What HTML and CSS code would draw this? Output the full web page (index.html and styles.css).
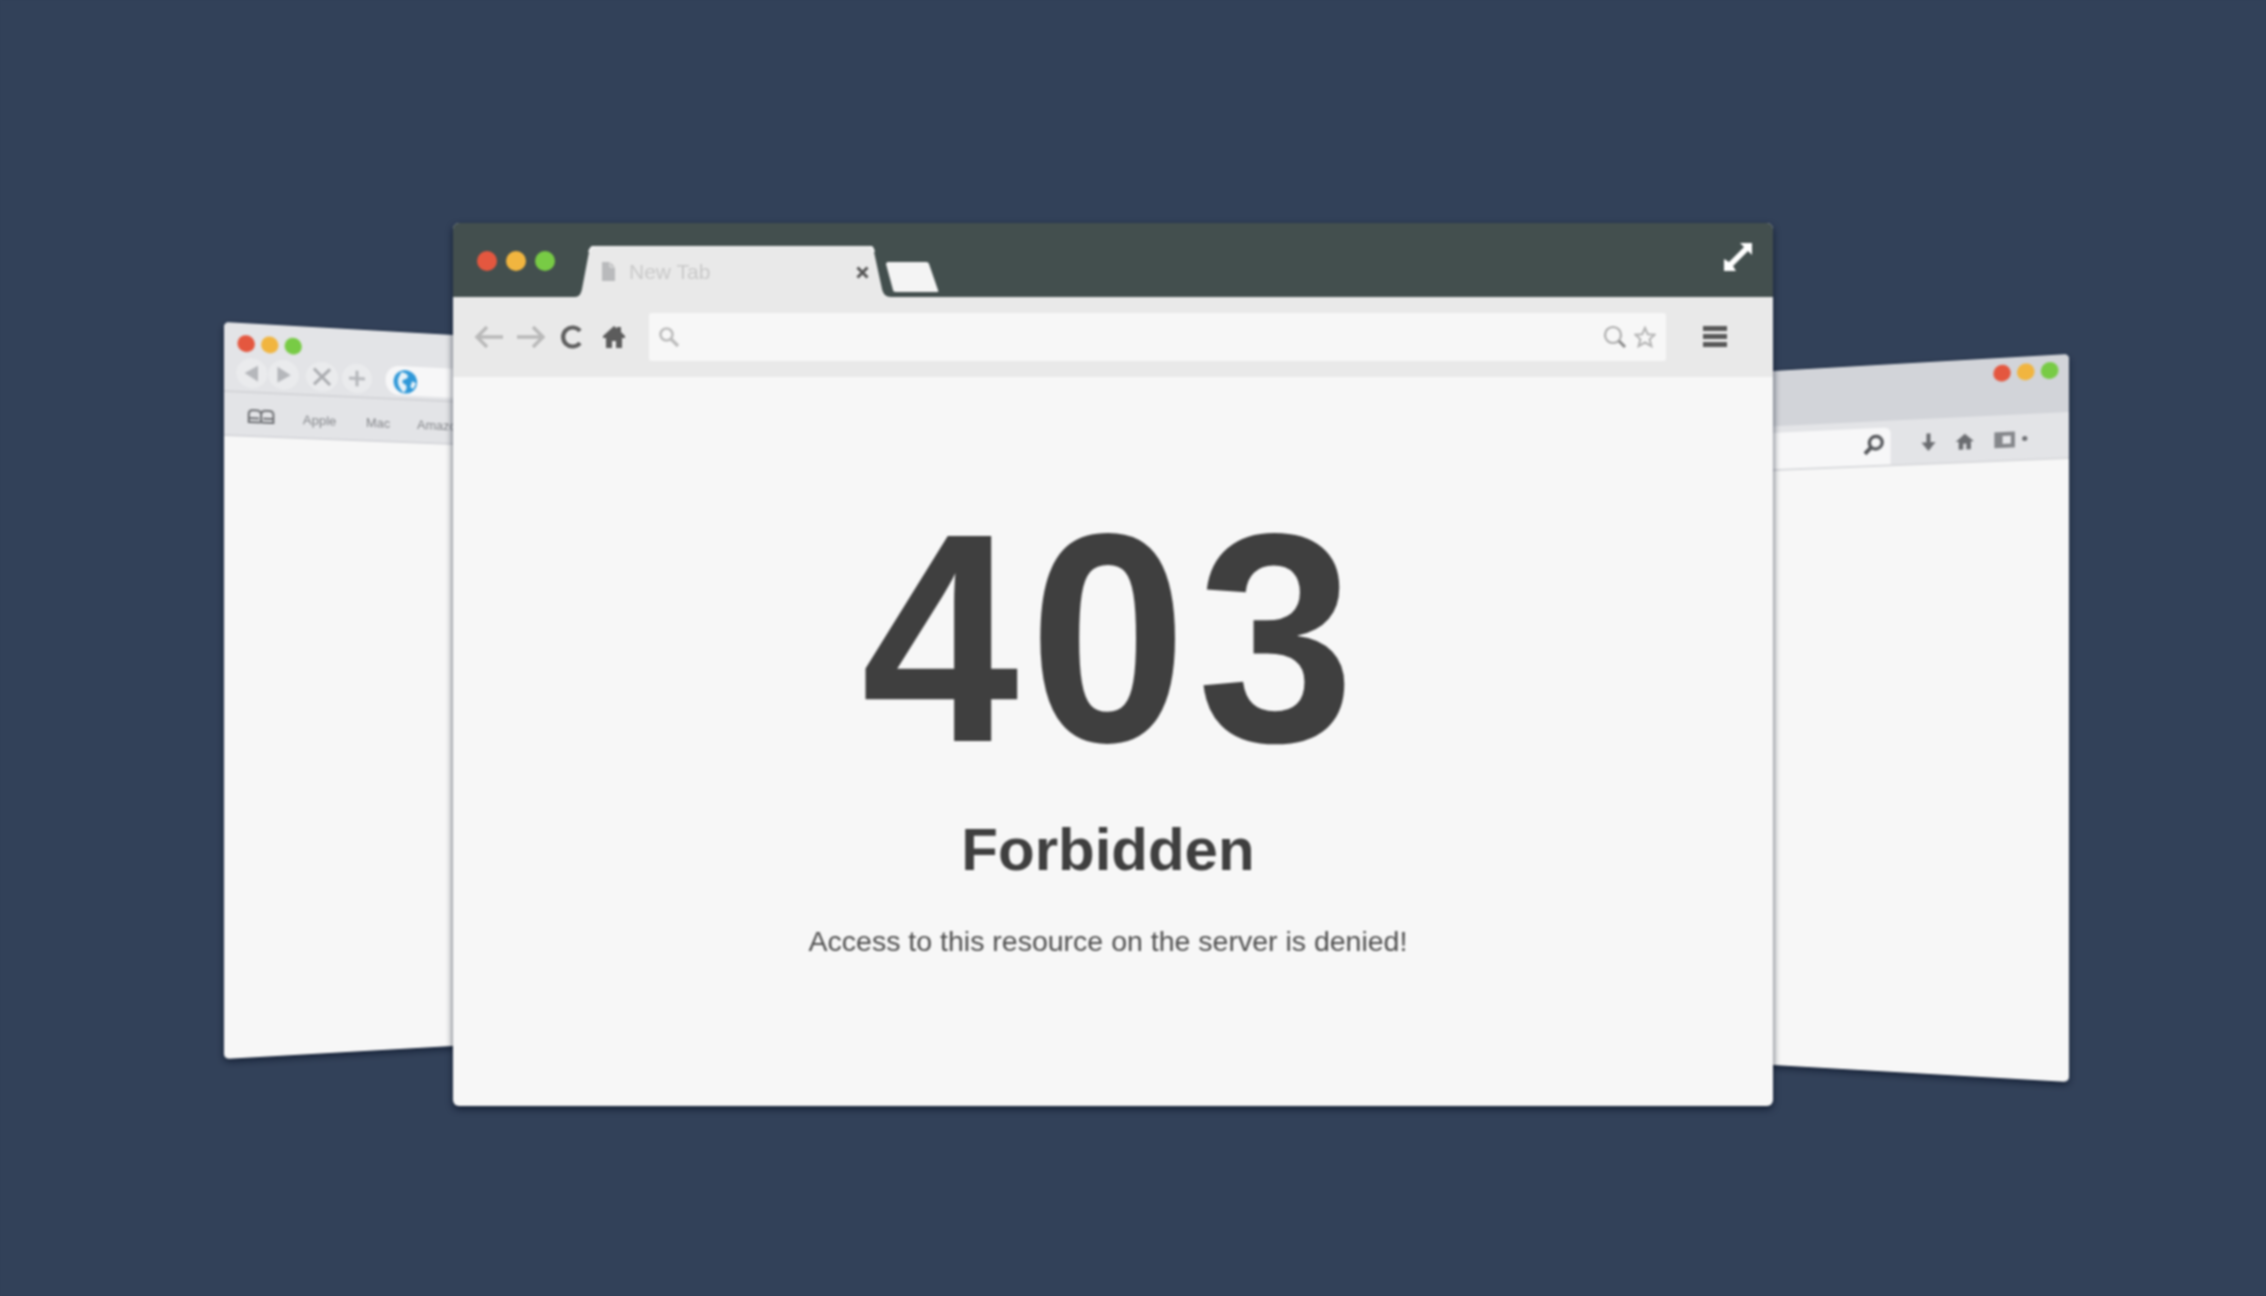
FILE: index.html
```html
<!DOCTYPE html>
<html lang="en">
<head>
<meta charset="utf-8">
<title>403 Forbidden</title>
<link rel="stylesheet" href="styles.css">
</head>
<body>
<div class="stage">

  <section class="side side-left">
    <div class="sl-chrome">
      <div class="sl-lights"><i class="dot red"></i><i class="dot yellow"></i><i class="dot green"></i></div>
      <div class="sl-tools">
        <span class="sl-btn"><svg width="18" height="20" viewBox="0 0 18 20"><path d="M15 2V18L2 10Z" fill="#b5b7bb"/></svg></span>
        <span class="sl-btn"><svg width="18" height="20" viewBox="0 0 18 20"><path d="M3 2V18L16 10Z" fill="#b5b7bb"/></svg></span>
        <span class="sl-btn sl-gap"><svg width="22" height="22" viewBox="0 0 22 22"><path d="M3 3L19 19M19 3L3 19" stroke="#a9abaf" stroke-width="3"/></svg></span>
        <span class="sl-btn"><svg width="20" height="20" viewBox="0 0 20 20"><path d="M10 2V18M2 10H18" stroke="#b5b7bb" stroke-width="3"/></svg></span>
        <span class="sl-field"><svg width="26" height="26" viewBox="0 0 26 26"><circle cx="13" cy="13" r="12" fill="#2f98d8"/><path d="M9 3C14 4 17 6 15 9C13 11 10 10 10 13C10 15 13 15 14 17C15 20 13 23 11 24C7 20 4 15 6 9Z" fill="#e8f3f9"/><path d="M20 12L24 14L21 20L18 18Z" fill="#e8f3f9"/></svg></span>
      </div>
      <div class="sl-marks">
        <svg width="28" height="16" viewBox="0 0 28 16"><path d="M14 6C14 3 12 2 9 2H6C3 2 2 3 2 6V14H12C13 14 14 13 14 12C14 13 15 14 16 14H26V6C26 3 25 2 22 2H19C16 2 14 3 14 6V12M2 10H12M16 10H26" fill="none" stroke="#6f7175" stroke-width="2"/></svg>
        <span class="sl-mark m1">Apple</span><span class="sl-mark m2">Mac</span><span class="sl-mark m3">Amazon</span>
      </div>
    </div>
  </section>

  <section class="side side-right">
    <div class="sr-title">
      <i class="dot red"></i><i class="dot yellow"></i><i class="dot green"></i>
    </div>
    <div class="sr-tools">
      <span class="sr-field"><svg width="24" height="24" viewBox="0 0 24 24"><circle cx="14" cy="10" r="6.5" fill="none" stroke="#55575b" stroke-width="3.4"/><path d="M9 15L3 21" stroke="#55575b" stroke-width="4"/></svg></span>
      <svg class="sr-ic1" width="16" height="22" viewBox="0 0 16 22"><path d="M6 1H10V10H15L8 19L1 10H6Z" fill="#6b6d71"/></svg>
      <svg width="20" height="20" viewBox="0 0 20 20"><path d="M10 2L19 10H16V18H11.5V12H8.5V18H4V10H1Z" fill="#6b6d71"/></svg>
      <svg width="22" height="18" viewBox="0 0 22 18"><path d="M1 1H21V17H1Z" fill="#85878b"/><path d="M9 5H17V13H9Z" fill="#e6e7ea"/></svg>
      <i class="sr-dot"></i>
    </div>
  </section>

  <main class="window">
    <header class="titlebar">
      <div class="lights"><i class="light red"></i><i class="light yellow"></i><i class="light green"></i></div>
      <div class="tab">
        <svg class="tab-shape" width="316" height="51" viewBox="0 0 316 51"><path d="M0 51C4 51 6 48 7 43L14 6C15 2 17 0 21 0H293C297 0 298 2 299 6L307 43C308 48 311 51 316 51Z" fill="#e9e9e9"/><path d="M14 6C15 2 17 0 21 0H293C297 0 298 2 299 6" fill="none" stroke="#f6f6f6" stroke-width="2"/></svg>
        <svg class="tab-doc" width="15" height="19" viewBox="0 0 15 19"><path d="M1 0H9L14 5V19H1Z" fill="#b9babc"/><path d="M9 0V5H14" fill="none" stroke="#e9e9e9"/></svg>
        <span class="tab-label">New Tab</span>
        <svg class="tab-close" width="13" height="13" viewBox="0 0 13 13"><path d="M1.500 1.500L11.500 11.500M11.500 1.500L1.500 11.500" stroke="#555" stroke-width="3"/></svg>
      </div>
      <svg class="newtab" width="54" height="30" viewBox="0 0 54 30"><path d="M1 2C1 1 2 0 3 0H41C43 0 44 1 44 2L53 28C54 30 53 30 51 30H11C9 30 8 29 8 28Z" fill="#f4f4f4"/></svg>
      <svg class="expand" width="32" height="32" viewBox="0 0 32 32"><path d="M18 2H30V14L26 10L11 25L14 30H2V18L7 21L22 6Z" fill="#fff"/></svg>
    </header>
    <nav class="toolbar">
      <svg width="30" height="24" viewBox="0 0 30 24"><path d="M29 12H4M13 2L3 12L13 22" fill="none" stroke="#b9b9b9" stroke-width="3.4"/></svg>
      <svg width="30" height="24" viewBox="0 0 30 24"><path d="M1 12H26M17 2L27 12L17 22" fill="none" stroke="#b9b9b9" stroke-width="3.4"/></svg>
      <svg width="24" height="24" viewBox="0 0 24 24"><path d="M20 6A9.500 9.500 0 1 0 20 18" fill="none" stroke="#5f5f5f" stroke-width="4.200"/></svg>
      <svg width="24" height="24" viewBox="0 0 24 24"><path d="M12 1L15 3.500V2H19V7L23 11V13H20V23H14V16H10V23H4V13H1V11Z" fill="#5c5c5c"/></svg>
      <div class="address">
        <svg width="22" height="22" viewBox="0 0 22 22"><circle cx="8.500" cy="8.500" r="6" fill="none" stroke="#bdbdbd" stroke-width="2.600"/><path d="M13 13L20 20" stroke="#bdbdbd" stroke-width="3.400"/></svg>
        <span class="address-end">
          <svg width="24" height="24" viewBox="0 0 24 24"><circle cx="10" cy="10" r="8" fill="none" stroke="#adadad" stroke-width="2.200"/><path d="M16 16L22 22" stroke="#8a8a8a" stroke-width="3"/></svg>
          <svg width="22" height="22" viewBox="0 0 24 24"><path d="M12 2L15 9L22.500 9.500L17 14.500L19 22L12 18L5 22L7 14.500L1.500 9.500L9 9Z" fill="none" stroke="#b4b4b4" stroke-width="2.200"/></svg>
        </span>
      </div>
      <div class="menu"><i></i><i></i><i></i></div>
    </nav>
    <div class="page">
      <h1 class="code">403</h1>
      <h2 class="name">Forbidden</h2>
      <p class="msg">Access to this resource on the server is denied!</p>
    </div>
  </main>
</div>
</body>
</html>
```

FILE: styles.css
```css
* { box-sizing: border-box; }
html, body { margin: 0; height: 100%; }
body { background: #324159; overflow: hidden; font-family: "Liberation Sans", Arial, sans-serif; }
.stage { position: relative; width: 2266px; height: 1296px; background: #324159; overflow: hidden; filter: blur(.9px); }
h1, h2, p { margin: 0; }
i { display: block; }

/* side windows on the canvas */
.side { position: absolute; background: #f7f7f7; border-radius: 5px; box-shadow: 0 3px 7px rgba(8, 18, 38, .7); overflow: hidden; }
.side-left { left: 224px; top: 322px; width: 240px; height: 737px; transform-origin: 0 0; transform: matrix3d(1.0366, .05885, 0, .00016, 0, 1, 0, 0, 0, 0, 1, 0, 0, 0, 0, 1); }
.side-right { left: 1760px; top: 354px; width: 309px; height: 728px; transform-origin: 100% 0; transform: matrix3d(1.049, -.06025, 0, -.0001655, 0, 1, 0, 0, 0, 0, 1, 0, 0, 0, 0, 1); }
.dot { width: 17px; height: 17px; border-radius: 50%; }
.red { background: #e4573f; }
.yellow { background: #f1b53f; }
.green { background: #78cb45; }

.sl-chrome { height: 114px; background: #e3e4e7; border-bottom: 2px solid #d6d7db; display: flex; flex-direction: column; }
.sl-lights { display: flex; gap: 6px; padding: 12px 0 0 13px; height: 32px; }
.sl-tools { display: flex; align-items: center; height: 38px; margin-bottom: 4px; padding-left: 12px; gap: 1px; border-bottom: 2px solid #d3d4d8; }
.sl-btn { width: 30px; height: 30px; border-radius: 50%; background: #eaebed; display: flex; align-items: center; justify-content: center; flex: none; }
.sl-gap { margin-left: 6px; margin-right: 3px; width: 32px; }
.sl-field { flex: 1; align-self: stretch; margin: 3px 0 3px 13px; background: #f7f7f8; border-radius: 14px 0 0 14px; padding: 3px 0 0 7px; }
.sl-marks { flex: 1; position: relative; display: flex; align-items: center; padding-left: 22px; }
.sl-mark { position: absolute; top: 13px; font-size: 13px; color: #85878b; white-space: nowrap; }
.m1 { left: 77px; }
.m2 { left: 140px; }
.m3 { left: 192px; }

.sr-title { height: 58px; background: #d2d4d9; display: flex; justify-content: flex-end; gap: 6px; padding: 7px 10px 0 0; }
.sr-tools { height: 47px; background: #e3e4e7; border-bottom: 2px solid #d9dadd; display: flex; align-items: center; gap: 18px; padding: 4px 40px 0 0; }
.sr-field { flex: 1; align-self: flex-end; height: 38px; background: #f7f7f8; display: flex; justify-content: flex-end; align-items: center; padding: 0 5px 4px 0; border-radius: 0 6px 0 0; }
.sr-ic1 { margin-left: 12px; }
.sr-dot { width: 5px; height: 5px; border-radius: 50%; background: #6b6d71; margin-left: -12px; }

/* main window */
.window { position: absolute; left: 453px; top: 223px; width: 1320px; height: 883px; border-radius: 6px; background: #f7f7f7; box-shadow: 0 3px 7px rgba(8, 18, 38, .75); display: flex; flex-direction: column; }
.titlebar { height: 74px; flex: none; background: #434f4e; border-radius: 6px 6px 0 0; display: flex; align-items: flex-start; position: relative; }
.lights { display: flex; gap: 9px; padding: 28px 0 0 24px; }
.light { width: 20px; height: 20px; border-radius: 50%; }
.tab { position: relative; width: 316px; height: 51px; margin: 23px 0 0 20px; flex: none; display: flex; align-items: center; padding: 0 0 0 26px; }
.tab-shape { position: absolute; inset: 0; }
.tab-doc { position: relative; }
.tab-label { position: relative; margin-left: 13px; font-size: 21px; color: #c9c9c9; }
.tab-close { position: absolute; left: 281px; top: 20px; }
.newtab { margin: 39px 0 0 -6px; flex: none; }
.expand { margin: 18px 0 0 auto; margin-right: 19px; flex: none; }

.toolbar { height: 80px; flex: none; background: #e9e9e9; display: flex; align-items: center; padding: 0 0 1px 21px; }
.toolbar > svg { flex: none; margin-right: 12px; }
.toolbar > svg:nth-child(3) { margin-right: 18px; margin-left: 2px; }
.toolbar > svg:nth-child(4) { margin-right: 0; }
.address { width: 1017px; height: 48px; margin-left: 23px; background: #f7f7f7; border-radius: 3px; display: flex; align-items: center; justify-content: space-between; padding: 0 10px 0 9px; }
.address-end { display: flex; align-items: center; gap: 7px; }
.address-end svg { display: block; }
.menu { margin-left: 37px; width: 24px; display: flex; flex-direction: column; gap: 3px; }
.menu i { height: 5px; background: #585858; }

.page { flex: 1; display: flex; flex-direction: column; align-items: center; padding: 112px 10px 0 0; color: #3f3f3f; }
.code { font-size: 298px; line-height: 1; font-weight: 700; letter-spacing: 11px; margin-right: -10px; transform: scaleX(.95); }
.name { font-size: 60px; line-height: 1; font-weight: 700; margin-top: 33px; }
.msg { font-size: 28.5px; line-height: 1; font-weight: 400; margin-top: 47px; color: #4f4f4f; }
```
